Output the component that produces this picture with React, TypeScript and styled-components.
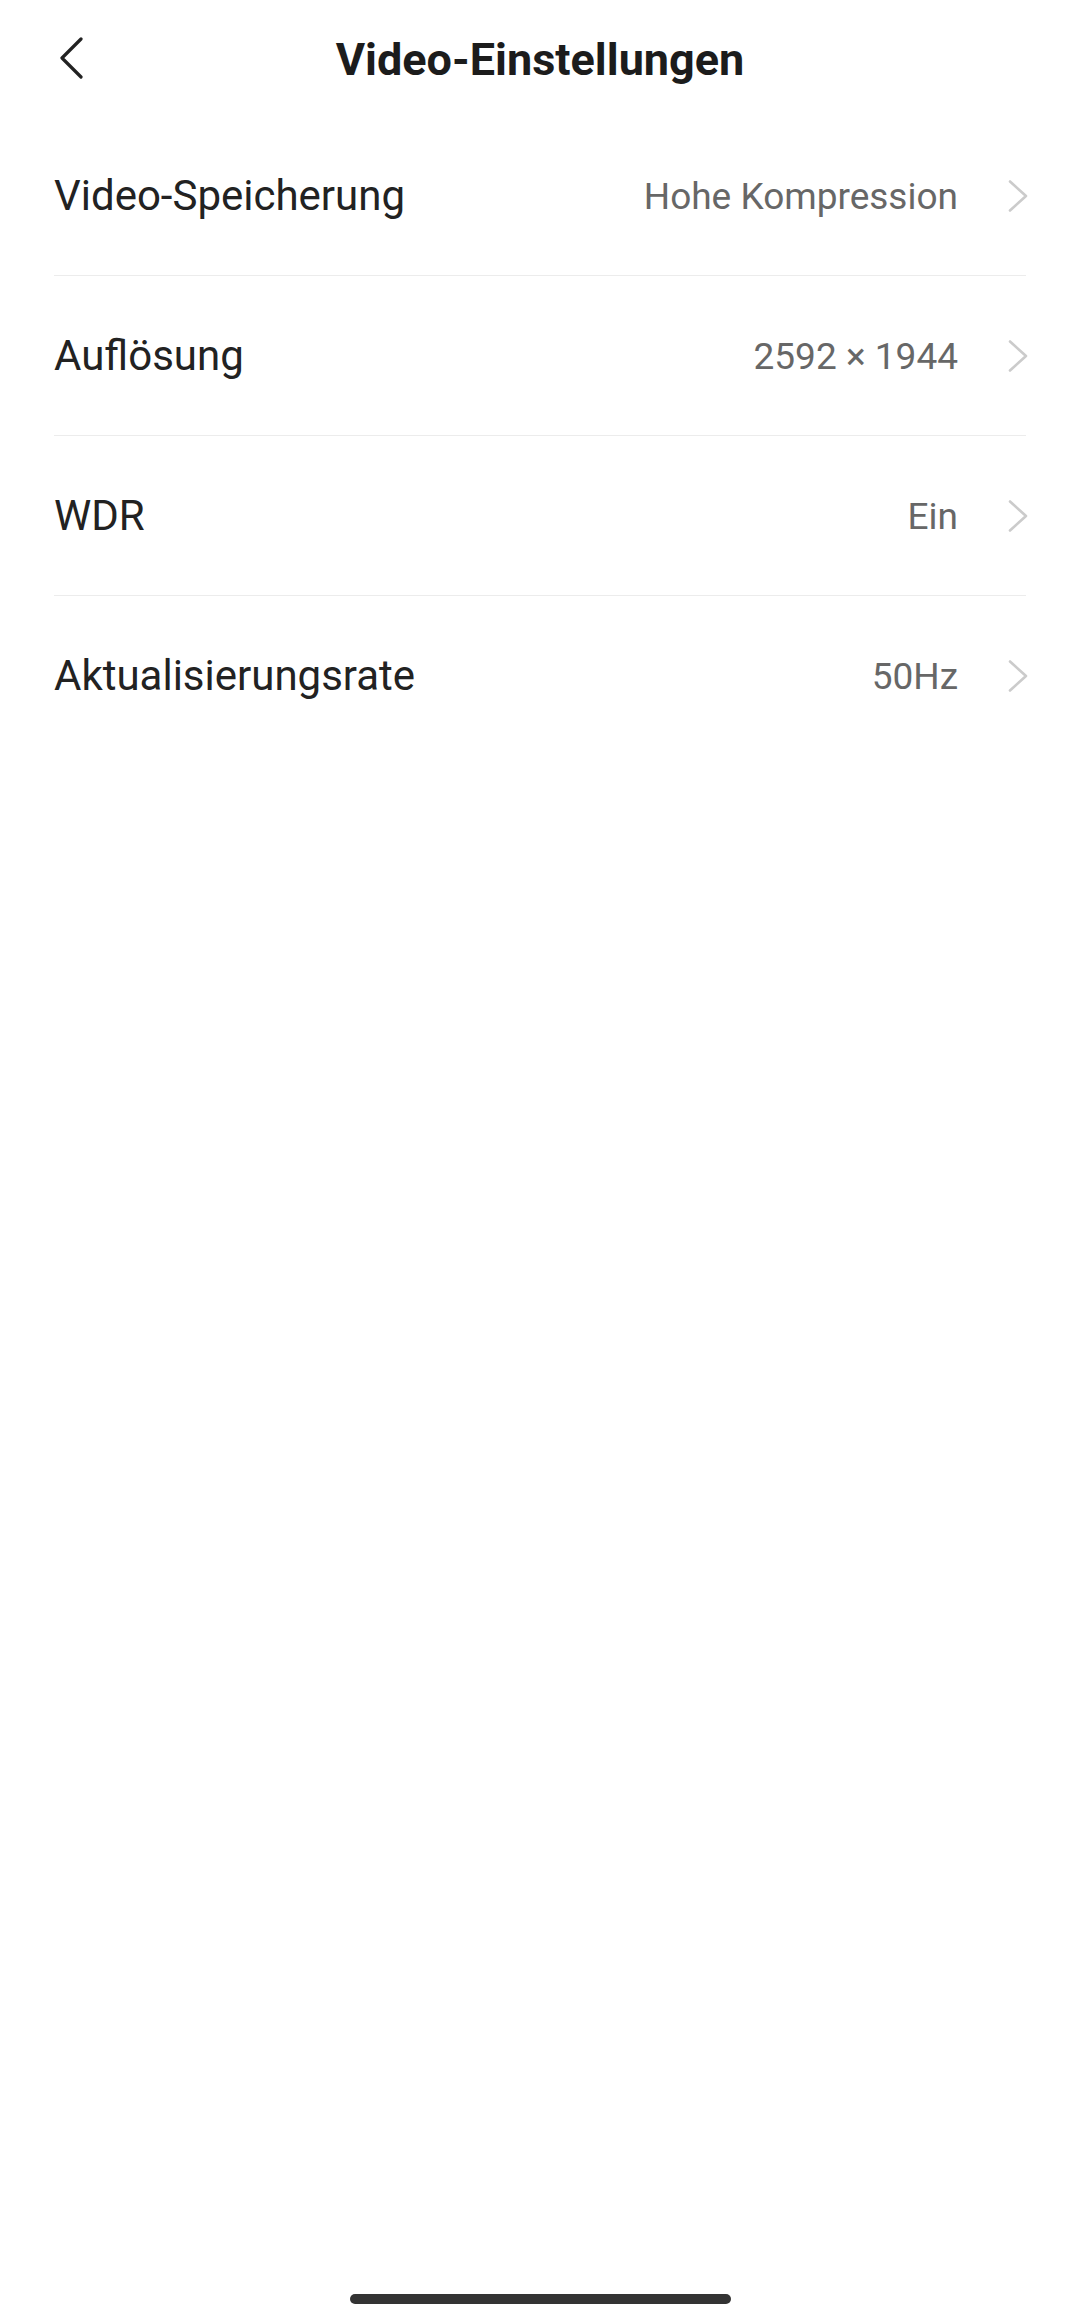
import React from 'react';
import styled, { createGlobalStyle } from 'styled-components';

interface SettingItem {
  label: string;
  value: string;
}

const settings: SettingItem[] = [
  { label: 'Video-Speicherung', value: 'Hohe Kompression' },
  { label: 'Auflösung', value: '2592 × 1944' },
  { label: 'WDR', value: 'Ein' },
  { label: 'Aktualisierungsrate', value: '50Hz' },
];

const GlobalStyle = createGlobalStyle`
  html, body {
    margin: 0;
    padding: 0;
    background: #ffffff;
  }
  body {
    font-family: Roboto, "Noto Sans", "Liberation Sans", sans-serif;
    -webkit-font-smoothing: antialiased;
  }
`;

const Page = styled.div`
  display: flex;
  flex-direction: column;
  min-height: 100vh;
  background: #ffffff;
`;

const Header = styled.header`
  display: grid;
  grid-template-columns: 1fr auto 1fr;
  align-items: center;
  height: 116px;
  padding: 0 54px;
  box-sizing: border-box;
`;

const BackButton = styled.button`
  justify-self: start;
  display: flex;
  align-items: center;
  background: none;
  border: none;
  padding: 0 0 0 5px;
  cursor: pointer;
`;

const Title = styled.h1`
  margin: 0;
  font-size: 45px;
  font-weight: 700;
  color: #1c1c1c;
  margin-top: 2px;
`;

const List = styled.ul`
  list-style: none;
  margin: 0;
  padding: 0 54px;
`;

const Row = styled.li`
  display: flex;
  align-items: center;
  height: 159px;
  border-bottom: 1px solid #ececec;
  cursor: pointer;

  &:last-child {
    border-bottom: none;
  }
`;

const Label = styled.span`
  flex: 1;
  font-size: 42px;
  color: #222222;
`;

const Value = styled.span`
  font-size: 37px;
  color: #676767;
  margin-top: 2px;
  margin-right: 50px;
`;

const Chevron = styled.svg`
  flex-shrink: 0;
  margin-right: -2px;
`;

const BottomArea = styled.div`
  margin-top: auto;
  display: flex;
  justify-content: center;
  padding-bottom: 16px;
`;

const HomeIndicator = styled.div`
  width: 381px;
  height: 10px;
  border-radius: 5px;
  background: #333333;
`;

const App: React.FC = () => {
  return (
    <Page>
      <GlobalStyle />
      <Header>
        <BackButton aria-label="Zurück">
          <svg width="24" height="42" viewBox="0 0 24 42" fill="none">
            <path
              d="M22 2 L3 21 L22 40"
              stroke="#222222"
              strokeWidth="3.2"
              strokeLinecap="round"
              strokeLinejoin="round"
            />
          </svg>
        </BackButton>
        <Title>Video-Einstellungen</Title>
        <div />
      </Header>

      <List>
        {settings.map((item) => (
          <Row key={item.label}>
            <Label>{item.label}</Label>
            <Value>{item.value}</Value>
            <Chevron width="20" height="32" viewBox="0 0 20 32" fill="none">
              <path
                d="M2 1.5 L18 16 L2 30.5"
                stroke="#cbcbcb"
                strokeWidth="2.6"
                strokeLinecap="round"
                strokeLinejoin="round"
              />
            </Chevron>
          </Row>
        ))}
      </List>

      <BottomArea>
        <HomeIndicator />
      </BottomArea>
    </Page>
  );
};

export default App;
